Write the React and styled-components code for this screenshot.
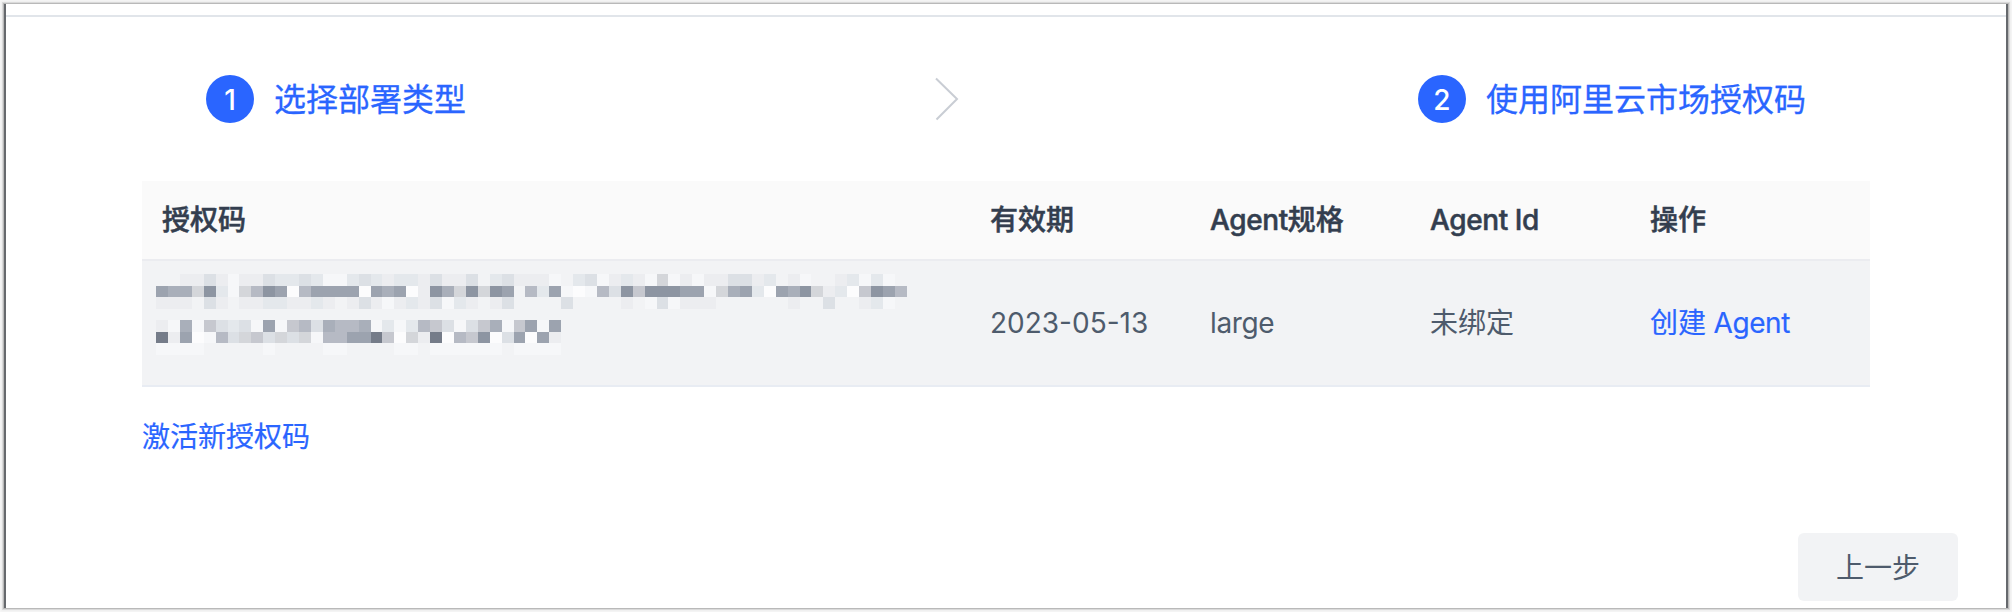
import React from "react";
import styled, { createGlobalStyle } from "styled-components";

const GlobalStyle = createGlobalStyle`
  * { box-sizing: border-box; }
  body {
    margin: 0;
    background: #f8f8f8;
    font-family: Inter, "Noto Sans CJK SC", sans-serif;
    font-size: 28px;
    line-height: 44px;
    color: #4e5b6c;
  }
`;

const Window = styled.div`
  display: flex;
  flex-direction: column;
  width: 2004px;
  height: 604px;
  margin: 4px;
  background: #fff;
  border-left: 2px solid #66696d;
  border-right: 2px solid #66696d;
  box-shadow: 0 0 0 1px #b9b9b9, 0 0 0 2px #dadada, 0 0 2px 3px #ececec;
`;

const TopBar = styled.div`
  height: 13px;
  flex: none;
  border-bottom: 2px solid #e1e5ea;
`;

const Content = styled.main`
  display: flex;
  flex-direction: column;
  padding: 0 136px;
`;

const Steps = styled.div`
  display: flex;
  align-items: center;
  justify-content: space-between;
  height: 164px;
  padding: 0 64px;
`;

const Step = styled.div`
  display: flex;
  align-items: center;
  gap: 20px;
  color: #2a65ff;
  font-size: 32px;
`;

const StepTitle = styled.span`
  padding-top: 2px;
  -webkit-text-stroke: 0.3px currentColor;
`;

const StepNumber = styled.span`
  display: flex;
  align-items: center;
  justify-content: center;
  width: 48px;
  height: 48px;
  padding-top: 1px;
  border-radius: 50%;
  background: #2a65ff;
  color: #fff;
  font-size: 28px;
  font-weight: 500;
`;

const Chevron = styled.svg`
  width: 24px;
  height: 44px;
  margin-left: 10px;
  fill: none;
  stroke: #c9cdd4;
  stroke-width: 2;
`;

const Row = styled.div`
  display: grid;
  grid-template-columns: 828px 220px 220px 220px 240px;
  align-items: center;
`;

const HeadRow = styled(Row)`
  height: 80px;
  background: #fafafa;
  border-bottom: 2px solid #ebecf0;
  color: #333e4f;
  font-weight: 500;
  -webkit-text-stroke: 0.5px currentColor;
`;

const BodyRow = styled(Row)`
  height: 126px;
  background: #f2f3f5;
  border-bottom: 2px solid #e8ecf3;
`;

const Cell = styled.div`
  padding: 0 20px;
  white-space: nowrap;
`;

const Latin = styled.span`
  letter-spacing: -0.4px;
`;

const CodeCell = styled.div`
  align-self: start;
  padding: 13px 14px 0;
`;

const Mosaic = styled.svg`
  display: block;
  width: 750.75px;
  height: 81px;
`;

const Link = styled.a`
  color: #2a65ff;
  white-space: nowrap;
  -webkit-text-stroke: 0.2px currentColor;
`;

const Activate = styled(Link)`
  margin-top: 28px;
  align-self: flex-start;
`;

const Footer = styled.footer`
  display: flex;
  justify-content: flex-end;
  margin-top: auto;
  padding: 0 48px 7px 0;
`;

const BackButton = styled.button`
  width: 160px;
  height: 68px;
  padding: 1px 0 0;
  border: 0;
  border-radius: 6px;
  background: #f2f3f5;
  color: #4e5b6c;
  font: inherit;
`;

const SHADES = {
  w: "#fcfcfd", a: "#f6f7f9", b: "#ecedf0", c: "#e4e8ec", d: "#dce0e5",
  e: "#d4d6da", f: "#c6c8cf", g: "#b6bac4", h: "#a9afba", i: "#9ca3af",
  j: "#8d95a2", k: "#757c89",
};

const MASKED_CODE = [
  "  bbdbabbdccdcaacdcbccbdbbd cdbbba cdabcbaeababbddbc ba  bcaca ",
  "ihhejcaegjiwgiiiiwihiwbjhejeji gciawagdjfjjjiiaehicwihjebcwfjig",
  "bbb db bbccbbcb bdbabcbdacb bd    d    b adabbb      b  d  bca ",
  "",
  "bahafdcdaiafgdhgghacacgfdadfhafiai",
  "kbiwagdefdedeaggiikfwebkwgfjwdiwib",
  "aaaa     a    aa    aa aaaaaa aaaa",
];

const MosaicCode = () => (
  <Mosaic viewBox="0 0 63 7" preserveAspectRatio="none" shapeRendering="crispEdges">
    {MASKED_CODE.map((line, y) =>
      [...line].map((ch, x) =>
        SHADES[ch] ? (
          <rect key={`${x}-${y}`} x={x} y={y} width="1" height="1" fill={SHADES[ch]} />
        ) : null
      )
    )}
  </Mosaic>
);

export default function App() {
  return (
    <>
      <GlobalStyle />
      <Window>
        <TopBar />
        <Content>
          <Steps>
            <Step><StepNumber>1</StepNumber><StepTitle>选择部署类型</StepTitle></Step>
            <Chevron viewBox="0 0 24 44"><path d="M1 1.5 22 22 1.5 42.5" /></Chevron>
            <Step><StepNumber>2</StepNumber><StepTitle>使用阿里云市场授权码</StepTitle></Step>
          </Steps>
          <HeadRow>
            <Cell>授权码</Cell>
            <Cell>有效期</Cell>
            <Cell><Latin>Agent</Latin>规格</Cell>
            <Cell><Latin>Agent Id</Latin></Cell>
            <Cell>操作</Cell>
          </HeadRow>
          <BodyRow>
            <CodeCell><MosaicCode /></CodeCell>
            <Cell>2023-05-13</Cell>
            <Cell><Latin>large</Latin></Cell>
            <Cell>未绑定</Cell>
            <Cell><Link>创建<Latin> Agent</Latin></Link></Cell>
          </BodyRow>
          <Activate>激活新授权码</Activate>
        </Content>
        <Footer><BackButton>上一步</BackButton></Footer>
      </Window>
    </>
  );
}
